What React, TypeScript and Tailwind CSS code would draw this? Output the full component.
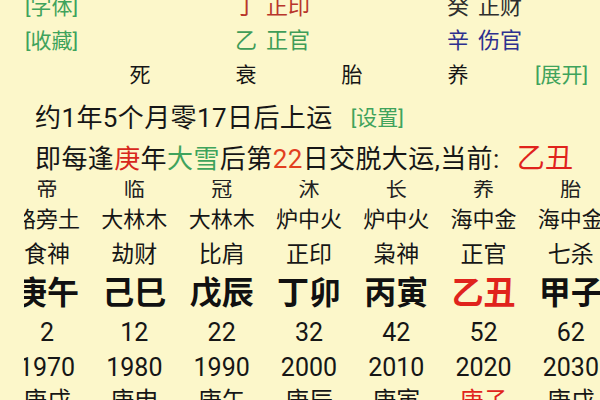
import React from 'react';

type Cell = { text: string; red?: boolean };

const stages = ['帝', '临', '冠', '沐', '长', '养', '胎'];
const nayin = ['路旁土', '大林木', '大林木', '炉中火', '炉中火', '海中金', '海中金'];
const gods = ['食神', '劫财', '比肩', '正印', '枭神', '正官', '七杀'];
const pillars: Cell[] = [
  { text: '庚午' },
  { text: '己巳' },
  { text: '戊辰' },
  { text: '丁卯' },
  { text: '丙寅' },
  { text: '乙丑', red: true },
  { text: '甲子' }
];
const ages = ['2', '12', '22', '32', '42', '52', '62'];
const years = ['1970', '1980', '1990', '2000', '2010', '2020', '2030'];
const liunian: Cell[] = [
  { text: '庚戌' },
  { text: '庚申' },
  { text: '庚午' },
  { text: '庚辰' },
  { text: '庚寅' },
  { text: '庚子', red: true },
  { text: '庚戌' }
];

const Row: React.FC<{ items: (string | Cell)[]; className: string }> = ({ items, className }) => (
  <div className={`grid grid-cols-[repeat(7,87.3px)] ${className}`}>
    {items.map((item, i) => {
      const cell = typeof item === 'string' ? { text: item } : item;
      return (
        <div key={i} className={`whitespace-nowrap text-center ${cell.red ? 'text-[#e0231c]' : ''}`}>
          {cell.text}
        </div>
      );
    })}
  </div>
);

const Stem: React.FC<{ stem: string; god: string; color: string }> = ({ stem, god, color }) => (
  <div className={`flex h-[34px] gap-[9px] whitespace-nowrap pl-[42px] text-[22px] leading-[34px] ${color}`}>
    <span>{stem}</span>
    <span>{god}</span>
  </div>
);

const App: React.FC = () => {
  return (
    <div className="h-[400px] w-[600px] overflow-hidden bg-[#fcf7ca] font-[family-name:Roboto,'Noto_Sans_CJK_SC',sans-serif] text-[#161616]">
      {/* 藏干 */}
      <div className="-mt-[10px] grid grid-cols-[87px_repeat(4,106px)_1fr] text-[21px]">
        <div className="h-[34px] pl-[25px] leading-[34px] text-[#3fa35c]">[字体]</div>
        <div />
        <Stem stem="丁" god="正印" color="text-[#b8352b]" />
        <div />
        <Stem stem="癸" god="正财" color="text-[#2e2e2e]" />
        <div />

        <div className="h-[34px] pl-[25px] leading-[34px] text-[#3fa35c]">[收藏]</div>
        <div />
        <Stem stem="乙" god="正官" color="text-[#3f9c58]" />
        <div />
        <Stem stem="辛" god="伤官" color="text-[#2d2f8f]" />
        <div />

        <div />
        <div className="h-[34px] text-center leading-[34px]">死</div>
        <div className="h-[34px] text-center leading-[34px]">衰</div>
        <div className="h-[34px] text-center leading-[34px]">胎</div>
        <div className="h-[34px] text-center leading-[34px]">养</div>
        <div className="h-[34px] pl-[24px] leading-[34px] text-[#3fa35c]">[展开]</div>
      </div>

      {/* 起运 */}
      <div className="mt-[6px] flex h-[40px] items-center pl-[35px] text-[26px] leading-[40px]">
        <span className="tracking-[0.4px]">约1年5个月零17日后上运</span>
        <span className="ml-[18px] text-[21px] text-[#3fa35c]">[设置]</span>
      </div>
      <div className="flex h-[42px] items-center whitespace-nowrap pl-[35px] text-[26px] leading-[40px] tracking-[0.4px]">
        <span>即每逢</span>
        <span className="text-[#d8281c]">庚</span>
        <span>年</span>
        <span className="text-[#3fa35c]">大雪</span>
        <span>后第</span>
        <span className="text-[#e2401e]">22</span>
        <span>日交脱大运,当前:</span>
        <span className="ml-[17px] text-[28px] text-[#e0231c]">乙丑</span>
      </div>

      {/* 大运 */}
      <div className="ml-[24px] w-[576px] overflow-hidden">
        <div className="-ml-[20.6px]">
          <div className="h-[18px] overflow-hidden">
            <Row items={stages} className="text-[21px] leading-[18px] text-[#222]" />
          </div>
          <Row items={nayin} className="h-[46px] text-[22px] leading-[44px]" />
          <Row items={gods} className="h-[22px] text-[23px] leading-[22px]" />
          <Row items={pillars} className="h-[54px] text-[32px] font-bold leading-[54px] text-[#111]" />
          <Row items={ages} className="h-[26px] text-[25px] leading-[26px]" />
          <Row items={years} className="h-[44px] text-[25px] leading-[44px]" />
          <Row items={liunian} className="h-[22px] text-[24px] leading-[22px]" />
        </div>
      </div>
    </div>
  );
};

export default App;
